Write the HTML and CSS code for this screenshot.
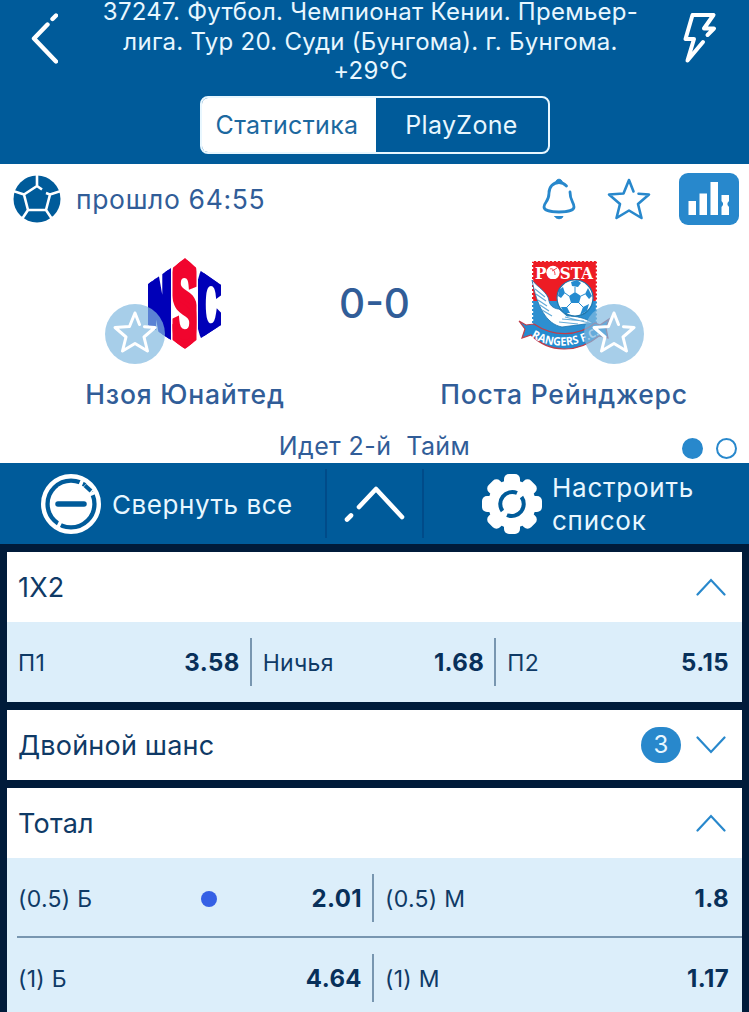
FILE: index.html
```html
<!DOCTYPE html>
<html lang="ru">
<head>
  <meta charset="UTF-8">
  <meta name="viewport" content="width=device-width, initial-scale=1.0">
  <title>Нзоя Юнайтед - Поста Рейнджерс</title>
  <link rel="stylesheet" href="styles.css">
</head>
<body>
  <header class="header">
    <div class="header-top">
      <svg class="back" width="28" height="52" viewBox="0 0 28 52" fill="none" stroke="#fff" stroke-width="4.4" stroke-linecap="round" stroke-linejoin="round">
        <path d="M26 3.500L22.500 7M17.500 12.500L4 26.500L26 49.500"/>
      </svg>
      <h1>37247. Футбол. Чемпионат Кении. Премьер-<br>лига. Тур 20. Суди (Бунгома). г. Бунгома.<br>+29°C</h1>
      <svg class="flash" width="34" height="52" viewBox="0 0 34 52" fill="none" stroke="#fff" stroke-width="4" stroke-linecap="round" stroke-linejoin="round">
        <path d="M24.500 23L31 16.500H21L30.500 3H9.500L2.500 27H11L4.500 48.500L20 30"/>
      </svg>
    </div>
    <div class="tabs">
      <button class="tab active">Статистика</button>
      <button class="tab">PlayZone</button>
    </div>
  </header>

  <section class="match">
    <div class="match-top">
      <svg width="48" height="48" viewBox="0 0 48 48">
        <circle cx="24" cy="24" r="23.500" fill="#005b9a"/>
        <path d="M24 0V11M24 11L29 14.500M33 18L37 19.500L33 35H15L11 19.500L24 11M37 19.500L48 16M33 35L39 44M15 35L9 44M11 19.500L0 16" fill="none" stroke="#fff" stroke-width="2.600"/>
      </svg>
      <span class="time">прошло 64:55</span>
      <svg class="bell" width="34" height="42" viewBox="0 0 34 42" fill="none" stroke="#2888cc" stroke-width="2.800" stroke-linecap="round" stroke-linejoin="round">
        <path d="M24.500 8C21.500 4.800 20 4.500 17 4.500C11 4.500 7 9 7 15C7 24 2 24 2 29C2 32 8 34 17 34S32 32 32 29C32 24 28 23 28 14"/>
        <path d="M13.500 4.500C14 0 20 0 20.500 4.500Z" fill="#2888cc" stroke-width="1"/>
        <path d="M13 38.500H21C20 41.500 14 41.500 13 38.500Z" fill="#2888cc" stroke-width="1"/>
      </svg>
      <svg class="star" width="44" height="42" viewBox="0 0 44 42" fill="none" stroke="#2888cc" stroke-width="2.600" stroke-linecap="round" stroke-linejoin="round">
        <path d="M26.500 13.500L22 2L16.500 15.500L2 16.500L13 26L9.500 40L22 32.500L34.500 40L31 26L42 16.500L31.500 15.700"/>
      </svg>
      <svg class="stats" width="60" height="52" viewBox="0 0 60 52">
        <rect width="60" height="52" rx="9" fill="#2888cc"/>
        <path d="M9.500 28H17V42H9.500ZM20.500 20.500H28V42H20.500ZM31.500 9H39V42H31.500ZM42.500 22H50V28L48.500 30V32L50 34V42H42.500V34L44 32V30L42.500 28Z" fill="#fff"/>
      </svg>
    </div>

    <div class="teams">
      <div class="team">
        <div class="crest">
          <svg width="74" height="92" viewBox="0 0 74 92">
            <clipPath id="panelN"><path d="M0 26L23 10V82L0 67Z"/></clipPath>
            <clipPath id="panelS"><path d="M24.500 10L37 0L48.500 10V82L37 91L24.500 82Z"/></clipPath>
            <clipPath id="panelC"><path d="M50 11L73 27V67L50 82Z"/></clipPath>
            <g class="nsc">
              <g clip-path="url(#panelN)" fill="#0000b8" stroke="#0000b8"><text transform="translate(-1 86) scale(.68 2.350)" font-size="46" textLength="36" lengthAdjust="spacingAndGlyphs" stroke-width="7">N</text></g>
              <g clip-path="url(#panelS)" fill="#f1052e" stroke="#f1052e"><text transform="translate(22.500 89) scale(.78 2.700)" font-size="46" textLength="36" lengthAdjust="spacingAndGlyphs" stroke-width="4">S</text></g>
              <g clip-path="url(#panelC)" fill="#0000b8" stroke="#0000b8"><text transform="translate(48.500 82) scale(.76 2.200)" font-size="46" textLength="36" lengthAdjust="spacingAndGlyphs" stroke-width="5.500">C</text></g>
            </g>
          </svg>
          <span class="fav fav-left">
            <svg width="44" height="42" viewBox="0 0 44 42"><path d="M26.500 13.500L22 2L16.500 15.500L2 16.500L13 26L9.500 40L22 32.500L34.500 40L31 26L42 16.500L31.500 15.700"/></svg>
          </span>
        </div>
        <div class="name">Нзоя Юнайтед</div>
      </div>
      <div class="score">0-0</div>
      <div class="team">
        <div class="crest">
          <svg width="94" height="92" viewBox="0 0 94 92">
            <rect x="15" y="3" width="65" height="40" fill="#ed1c24"/>
            <rect x="15" y="43" width="65" height="32" fill="#2d8fd0"/>
            <path d="M15 2.500H80V75M15 75V2.500" fill="none" stroke="#fff" stroke-width="2.400" stroke-dasharray="2 2"/>
            <text class="posta" x="18" y="20.500" font-size="17" textLength="58" lengthAdjust="spacingAndGlyphs">POSTA</text>
            <circle cx="36" cy="14.300" r="6.600" fill="#fff"/>
            <path d="M33 11C35 10 38 12 38 17M40 10L35 13" fill="none" stroke="#ed1c24" stroke-width=".8"/>
            <path d="M15 22C20 29 31 34 32 43C33 49 39 51 42 51L50 58C60 58 68 60 76 65L45 69C29 66 20 48 15 22Z" fill="#fff" stroke="#1772ae" stroke-width=".8"/>
            <path d="M18 31L28 39M19 36L29 43M21 42L30 48M23 47L32 53M25 52L35 58M45 61L67 63M42 64L61 66M48 59L72 65" stroke="#65acd9" stroke-width="1.200"/>
            <circle cx="58" cy="40" r="18" fill="#fff" stroke="#1f75aa" stroke-width="1.200"/>
            <g fill="#248bd0">
              <path d="M58 34L64 38L62 45H54L52 38ZM54 24L60 22L64 25L61 29L55 28ZM71 30L75 38L72 41L68 36ZM42 32L46 29L48 35L44 40L41 38ZM44 49L50 49L53 55L47 55ZM66 49L72 46L70 53L63 57Z"/>
            </g>
            <path d="M58 34V29M64 38L68 36M62 45L66 49M54 45L50 49M52 38L48 35" stroke="#248bd0" stroke-width="1"/>
            <path d="M2 63L9 67L17 66C36 79 61 79 78 65L83 67L92 61L89 70L91 80L82 78C60 96 32 95 14 77L5 80L8 71Z" fill="#248bd0" stroke="#c03d48" stroke-width="1.200"/>
            <path id="ribbon" d="M14 79Q46 98 85 75" fill="none"/>
            <text class="rangers" font-size="11.500"><textPath href="#ribbon" textLength="72" lengthAdjust="spacingAndGlyphs">RANGERS F.C.</textPath></text>
          </svg>
          <span class="fav fav-right">
            <svg width="44" height="42" viewBox="0 0 44 42"><path d="M26.500 13.500L22 2L16.500 15.500L2 16.500L13 26L9.500 40L22 32.500L34.500 40L31 26L42 16.500L31.500 15.700"/></svg>
          </span>
        </div>
        <div class="name">Поста Рейнджерс</div>
      </div>
    </div>

    <div class="period">
      <span>Идет 2-й&nbsp; Тайм</span>
      <div class="dots"><i class="active"></i><i></i></div>
    </div>
  </section>

  <nav class="toolbar">
    <div class="tool collapse">
      <svg width="60" height="60" viewBox="0 0 60 60" fill="none">
        <circle cx="30" cy="30" r="27.800" stroke="#fff" stroke-width="4.400"/>
        <circle cx="30" cy="30" r="21.300" fill="#fff"/>
        <path d="M41.500 6L38.500 13M48 21L55 18M20 47L16.500 54" stroke="#fff" stroke-width="3.500"/>
        <path d="M43 12L50 19" stroke="#fff" stroke-width="9"/>
        <path d="M44 11.500L50 17" stroke="#005b9a" stroke-width="4"/>
        <path d="M17 30H43" stroke="#005b9a" stroke-width="5.500" stroke-linecap="round"/>
      </svg>
      <span>Свернуть все</span>
    </div>
    <div class="tool up">
      <svg width="62" height="38" viewBox="0 0 62 38" fill="none" stroke="#fff" stroke-width="4.600" stroke-linecap="round" stroke-linejoin="round">
        <path d="M3 34.500L7 30.500M15 22L32 4L58 32"/>
      </svg>
    </div>
    <div class="tool setup">
      <svg width="60" height="60" viewBox="0 0 60 60">
        <circle cx="30" cy="30" r="24" fill="#fff"/>
        <g fill="#fff">
          <rect x="22" y="0" width="16" height="60" rx="5"/>
          <rect x="22" y="0" width="16" height="60" rx="5" transform="rotate(45 30 30)"/>
          <rect x="22" y="0" width="16" height="60" rx="5" transform="rotate(90 30 30)"/>
          <rect x="22" y="0" width="16" height="60" rx="5" transform="rotate(135 30 30)"/>
        </g>
        <path d="M35 19A12 12 0 0 0 20.500 37M39.500 23A12 12 0 0 1 25 41" fill="none" stroke="#005b9a" stroke-width="4"/>
      </svg>
      <span>Настроить<br>список</span>
    </div>
  </nav>

  <main class="markets">
    <section class="market">
      <div class="market-head">
        <h2>1X2</h2>
        <svg class="arrow" width="30" height="18" viewBox="0 0 30 18"><path d="M1.500 16.500L15 2L28.500 16.500"/></svg>
      </div>
      <div class="row">
        <div class="bet">П1<b>3.58</b></div>
        <div class="bet">Ничья<b>1.68</b></div>
        <div class="bet">П2<b>5.15</b></div>
      </div>
    </section>

    <section class="market">
      <div class="market-head">
        <h2>Двойной шанс</h2>
        <span class="count">3</span>
        <svg class="arrow" width="30" height="18" viewBox="0 0 30 18"><path d="M1.500 1.500L15 16L28.500 1.500"/></svg>
      </div>
    </section>

    <section class="market">
      <div class="market-head">
        <h2>Тотал</h2>
        <svg class="arrow" width="30" height="18" viewBox="0 0 30 18"><path d="M1.500 16.500L15 2L28.500 16.500"/></svg>
      </div>
      <div class="row">
        <div class="bet">(0.5) Б<i class="mark"></i><b>2.01</b></div>
        <div class="bet">(0.5) М<b>1.8</b></div>
      </div>
      <div class="row">
        <div class="bet">(1) Б<b>4.64</b></div>
        <div class="bet">(1) М<b>1.17</b></div>
      </div>
    </section>
  </main>
</body>
</html>
```
FILE: styles.css
```css
* { box-sizing: border-box; }
body {
  margin: 0;
  height: 1012px;
  overflow: hidden;
  background: #001b3a;
  font-family: Inter, "Liberation Sans", sans-serif;
  color: #0f3a66;
}
svg { display: block; flex: none; }
h1, h2 { margin: 0; font-weight: 400; }

.header { height: 164px; background: #005b9a; color: #e8f7ff; }
.header-top {
  display: flex;
  justify-content: space-between;
  height: 96px;
  padding: 0 32px 0 30px;
}
.header h1 {
  margin-top: -3px;
  font-size: 24px;
  line-height: 29.5px;
  letter-spacing: 0.27px;
  text-align: center;
  white-space: nowrap;
}
.back, .flash { margin-top: 12px; }
.tabs {
  display: flex;
  width: 350px;
  height: 58px;
  margin: 0 auto;
  border: 2px solid #e8f7ff;
  border-radius: 8px;
  overflow: hidden;
}
.tab {
  flex: 1;
  padding: 0;
  border: 0;
  background: none;
  color: #e8f7ff;
  font: 25px Inter, sans-serif;
  letter-spacing: 0.35px;
}
.tab.active { flex: none; width: 174px; padding-right: 3px; background: #fff; color: #1c689f; }

.match { height: 299px; background: #fff; color: #315d98; }
.match-top { display: flex; align-items: center; height: 70px; padding: 0 10px 0 13px; }
.time { margin: 0 auto 0 15px; font-size: 26.5px; letter-spacing: 0.65px; }
.bell { margin-right: 31px; }
.star { margin-right: 28px; }
.teams { display: grid; grid-template-columns: 280px 1fr 280px; padding: 24px 45px 0; }
.team { display: flex; flex-direction: column; align-items: center; }
.crest { position: relative; height: 110px; }
.nsc { font-family: "Liberation Sans", sans-serif; font-weight: 700; }
.posta { font-family: "DejaVu Serif", serif; font-weight: 700; fill: #fff; }
.rangers { font-family: "Open Sans", sans-serif; font-weight: 700; fill: #fff; }
.fav {
  position: absolute;
  top: 46px;
  display: flex;
  justify-content: center;
  padding-top: 7px;
  width: 60px;
  height: 60px;
  border-radius: 50%;
  background: rgba(130, 185, 224, 0.7);
}
.fav path { fill: none; stroke: #fff; stroke-width: 3; stroke-linecap: round; stroke-linejoin: round; }
.fav-left { left: -43px; }
.fav-right { right: -33px; }
.name { height: 52px; line-height: 52px; font-size: 26.5px; font-weight: 500; letter-spacing: 0.8px; white-space: nowrap; }
.score { padding-top: 21px; text-align: center; font-size: 40.5px; line-height: 50px; font-weight: 500; white-space: nowrap; }
.period {
  position: relative;
  height: 43px;
  line-height: 52px;
  text-align: center;
  font-size: 25px;
  letter-spacing: 0.4px;
}
.dots { position: absolute; right: 12px; top: 18px; display: flex; gap: 13px; }
.dots i { width: 21px; height: 21px; border: 2px solid #2888cc; border-radius: 50%; }
.dots .active { background: #2888cc; }

.toolbar { display: flex; height: 81px; padding: 6px 0; background: #005b9a; color: #e8f7ff; }
.tool { display: flex; align-items: center; font-size: 26px; line-height: 33px; letter-spacing: 0.55px; white-space: nowrap; }
.tool span { padding-top: 1px; }
.collapse { width: 325px; padding-left: 41px; gap: 11px; }
.up { width: 99px; justify-content: center; border: solid #004b89; border-width: 0 2px; }
.setup { padding-left: 58px; gap: 10px; letter-spacing: 0.75px; }

.markets { padding: 8px 7px 0; }
.market { margin-bottom: 8px; background: #fff; }
.market-head { display: flex; align-items: center; height: 70px; padding: 0 16px 0 11px; }
.market h2 { margin-right: auto; font-size: 27px; letter-spacing: 0.2px; }
.count {
  width: 40px;
  height: 36px;
  margin-right: 15px;
  border-radius: 18px;
  background: #2888cc;
  color: #e8f7ff;
  font-size: 24px;
  line-height: 36px;
  text-align: center;
}
.arrow path { fill: none; stroke: #2888cc; stroke-width: 2.2; stroke-linecap: round; }
.row { position: relative; display: flex; height: 80px; padding-right: 3px; background: #dceefa; }
.row + .row::before {
  content: "";
  position: absolute;
  left: 10px;
  right: 0;
  top: -2px;
  height: 2px;
  background: #7896b0;
}
.bet {
  display: flex;
  flex: 1 1 0;
  align-items: center;
  height: 48px;
  margin-top: 16px;
  padding: 1px 10px 0 11px;
  font-size: 23px;
  letter-spacing: 0.3px;
}
.bet:not(:last-child) { border-right: 2px solid #7896b0; }
.bet b { margin-left: auto; font-size: 24px; font-weight: 700; letter-spacing: 0.4px; color: #08305a; }
.mark { width: 16px; height: 16px; margin-left: 109px; border-radius: 50%; background: #3560e5; }
```
